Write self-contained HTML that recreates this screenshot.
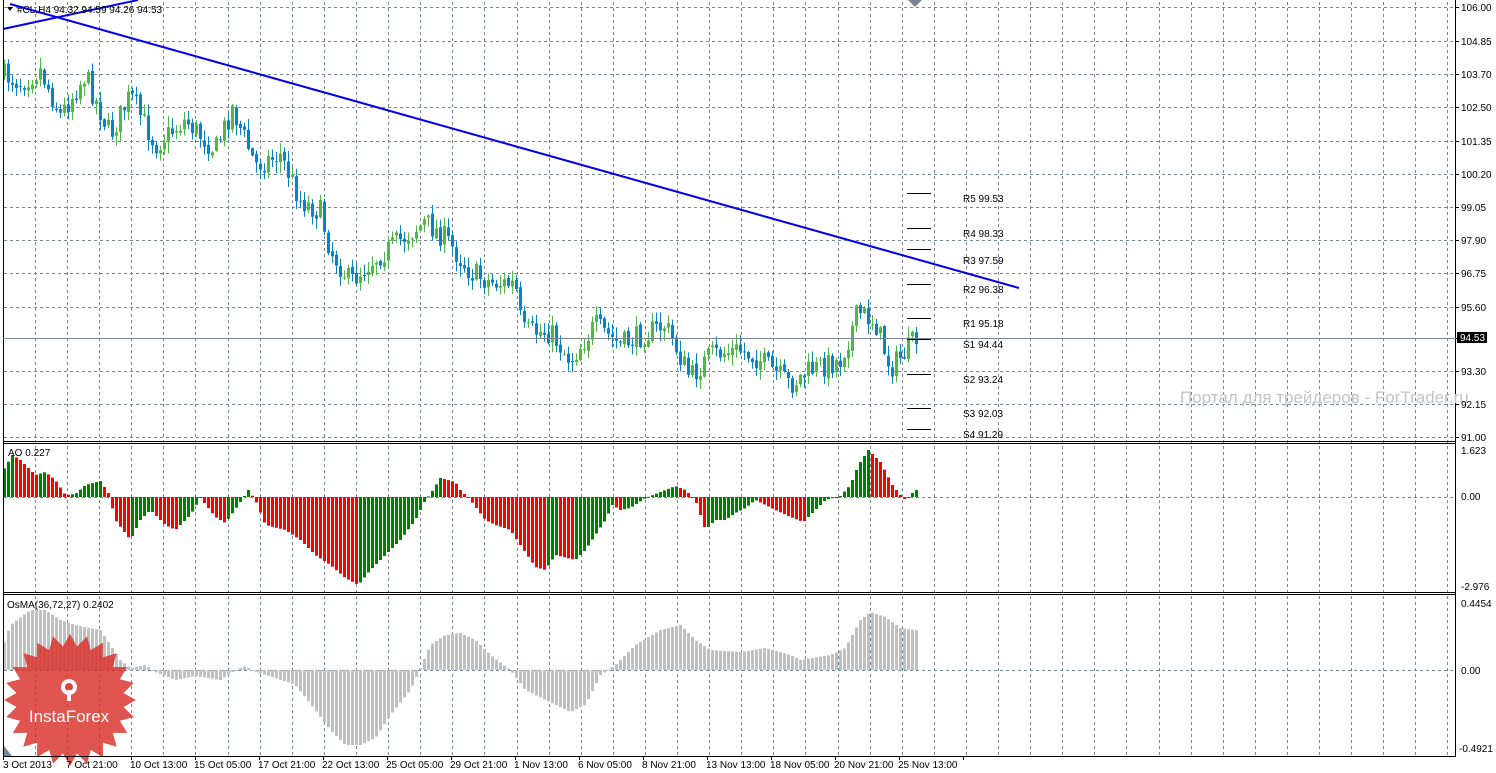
<!DOCTYPE html>
<html><head><meta charset="utf-8"><style>
html,body{margin:0;padding:0;background:#fff;width:1496px;height:773px;overflow:hidden}
svg{display:block;font-family:"Liberation Sans",Arial,sans-serif}
.ax{font-size:10px;fill:#000}
.pv{font-size:10px;fill:#000}
</style></head><body>
<svg id="s" width="1496" height="773" viewBox="0 0 1496 773" xmlns="http://www.w3.org/2000/svg">
<rect width="1496" height="773" fill="#fff"/>
<g id="grid" stroke="#7a8593" stroke-width="1" stroke-dasharray="3,3" fill="none"></g>
<g id="candles"></g>
<g id="ao"></g>
<g id="osma"></g>
<polygon id="star" fill="#d92a26" fill-opacity="0.8"/>
<g fill="#fff">
<circle cx="69" cy="687" r="8"/>
<circle cx="69" cy="687" r="4" fill="#e0403a"/>
<rect x="67" y="690" width="4" height="11"/>
</g>
<text x="69" y="722" text-anchor="middle" fill="#fff" font-size="17" font-family="'Liberation Sans',sans-serif">InstaForex</text>
<g stroke="#000" fill="none" stroke-width="1">
<line x1="3.5" y1="0" x2="3.5" y2="757"/>
<line x1="1455.5" y1="0" x2="1455.5" y2="757"/>
<line x1="3" y1="441.5" x2="1456" y2="441.5"/>
<line x1="3" y1="443.5" x2="1456" y2="443.5"/>
<line x1="3" y1="592.5" x2="1456" y2="592.5"/>
<line x1="3" y1="594.5" x2="1456" y2="594.5"/>
<line x1="3" y1="756.5" x2="1456" y2="756.5"/>
</g>
<line x1="10" y1="4" x2="1019" y2="288" stroke="#0000ee" stroke-width="2"/>
<line x1="3" y1="29" x2="138" y2="0" stroke="#0000ee" stroke-width="2"/>
<line x1="3" y1="338.5" x2="1456" y2="338.5" stroke="#7a8593"/>
<rect x="1457" y="332" width="30" height="11" fill="#000"/>
<text x="1460" y="341" font-size="10" fill="#fff">94.53</text>
<g stroke="#000" stroke-width="1">
<line x1="907" y1="193.5" x2="931" y2="193.5"/>
<line x1="907" y1="228.5" x2="931" y2="228.5"/>
<line x1="907" y1="249.5" x2="931" y2="249.5"/>
<line x1="907" y1="284.5" x2="931" y2="284.5"/>
<line x1="907" y1="318.5" x2="931" y2="318.5"/>
<line x1="907" y1="339.5" x2="931" y2="339.5"/>
<line x1="907" y1="374.5" x2="931" y2="374.5"/>
<line x1="907" y1="408.5" x2="931" y2="408.5"/>
<line x1="907" y1="429.5" x2="931" y2="429.5"/>
</g>
<g class="pv">
<text x="963" y="202">R5 99.53</text>
<text x="963" y="237">R4 98.33</text>
<text x="963" y="264">R3 97.59</text>
<text x="963" y="293">R2 96.38</text>
<text x="963" y="327">R1 95.18</text>
<text x="963" y="348">S1 94.44</text>
<text x="963" y="383">S2 93.24</text>
<text x="963" y="417">S3 92.03</text>
<text x="963" y="438">S4 91.29</text>
</g>
<text x="1180" y="403" font-size="17" fill="#c4c4c4" font-family="'Liberation Sans',sans-serif">Портал для трейдеров - ForTrader.ru</text>
<polygon points="7,7 13,7 10,11" fill="#000"/>
<text x="17" y="13" font-size="10" fill="#000">#CL,H4  94.32 94.59 94.26 94.53</text>
<text x="8" y="456" font-size="10" fill="#000">AO 0.227</text>
<text x="7" y="608" font-size="10" fill="#000">OsMA(36,72,27) 0.2402</text>
<polygon points="908,0 922,0 915,7" fill="#7a8593"/>
<polygon points="4,756 4,746 12,756" fill="#7a8593"/>
<g class="ax">
<text x="1461" y="11">106.00</text>
<text x="1461" y="45">104.85</text>
<text x="1461" y="78">103.70</text>
<text x="1461" y="111">102.50</text>
<text x="1461" y="145">101.35</text>
<text x="1461" y="178">100.20</text>
<text x="1461" y="211">99.05</text>
<text x="1461" y="244">97.90</text>
<text x="1461" y="277">96.75</text>
<text x="1461" y="311">95.60</text>
<text x="1461" y="375">93.30</text>
<text x="1461" y="408">92.15</text>
<text x="1461" y="441">91.00</text>
<text x="1461" y="454">1.623</text>
<text x="1461" y="500">0.00</text>
<text x="1461" y="590">-2.976</text>
<text x="1461" y="607">0.4454</text>
<text x="1461" y="674">0.00</text>
<text x="1459" y="752">-0.4921</text>
</g>
<g class="ax">
<text x="3" y="768">3 Oct 2013</text>
<text x="66" y="768">7 Oct 21:00</text>
<text x="130" y="768">10 Oct 13:00</text>
<text x="194" y="768">15 Oct 05:00</text>
<text x="258" y="768">17 Oct 21:00</text>
<text x="322" y="768">22 Oct 13:00</text>
<text x="386" y="768">25 Oct 05:00</text>
<text x="450" y="768">29 Oct 21:00</text>
<text x="514" y="768">1 Nov 13:00</text>
<text x="578" y="768">6 Nov 05:00</text>
<text x="642" y="768">8 Nov 21:00</text>
<text x="706" y="768">13 Nov 13:00</text>
<text x="770" y="768">18 Nov 05:00</text>
<text x="834" y="768">20 Nov 21:00</text>
<text x="898" y="768">25 Nov 13:00</text>
</g>
<g id="ticks" stroke="#000"></g>
</svg>
<script>
(function(){
var NS="http://www.w3.org/2000/svg";
function el(p,t,a){var e=document.createElementNS(NS,t);for(var k in a)e.setAttribute(k,a[k]);p.appendChild(e);return e;}
var g=document.getElementById('grid');
for(var x=35;x<1455;x+=32.1){var xx=Math.round(x)+.5;el(g,'line',{x1:xx,y1:2,x2:xx,y2:756});}
var hy=[7,41,74,107,141,174,207,240,273,307,371,404,437];
hy.forEach(function(y){el(g,'line',{x1:4,y1:y+.5,x2:1455,y2:y+.5});});
el(g,'line',{x1:4,y1:497.5,x2:1455,y2:497.5});
el(g,'line',{x1:4,y1:670.5,x2:1455,y2:670.5});
var tk=document.getElementById('ticks');
hy.concat([338]).forEach(function(y){el(tk,'line',{x1:1456,y1:y+.5,x2:1459,y2:y+.5});});
for(var x=3;x<1000;x+=64){el(tk,'line',{x1:x+.5,y1:757,x2:x+.5,y2:760});}
function interp(k,x){for(var i=0;i<k.length-1;i++){if(x>=k[i][0]&&x<=k[i+1][0]){var t=(x-k[i][0])/(k[i+1][0]-k[i][0]);return k[i][1]+t*(k[i+1][1]-k[i][1]);}}return x<k[0][0]?k[0][1]:k[k.length-1][1];}
var seed=7;function rnd(){seed=(seed*16807)%2147483647;return seed/2147483647;}
var pk=[[3,75],[20,82],[40,70],[60,115],[85,75],[110,135],[130,95],[155,145],[185,120],[215,150],[232,108],[255,165],[280,155],[300,200],[320,212],[330,250],[350,282],[370,262],[400,240],[425,222],[445,238],[470,272],[490,282],[515,285],[522,332],[550,332],[570,360],[595,325],[620,345],[665,325],[690,378],[710,355],[740,350],[760,360],[790,385],[810,370],[840,360],[858,312],[875,322],[890,368],[905,352],[915,340]];
var c=document.getElementById('candles');var prev=interp(pk,3);
for(var x=4;x<=916;x+=4){var cl=interp(pk,x)+(rnd()-0.5)*24;var op=prev+(rnd()-0.5)*4;
var tp=Math.min(op,cl),bt=Math.max(op,cl);var hi=tp-rnd()*10-1,lo=bt+rnd()*10+1;
var col=cl<op?'#4fb848':'#0a82c8';
el(c,'line',{x1:x+.5,y1:hi,x2:x+.5,y2:lo,stroke:col});
el(c,'rect',{x:x-1,y:tp,width:3,height:Math.max(1,bt-tp),fill:col});prev=cl;}
var ak=[[3,470],[12,455],[20,460],[35,475],[45,472],[55,480],[65,495],[75,494],[85,485],[100,481],[108,493],[115,520],[130,540],[140,520],[150,510],[165,525],[175,530],[190,515],[200,498],[215,517],[225,523],[238,505],[248,490],[255,500],[265,525],[285,530],[300,540],[315,555],[330,565],[345,578],[358,585],[370,570],[385,555],[400,540],[415,520],[425,500],[430,494],[440,478],[455,482],[460,490],[470,500],[485,520],[495,525],[510,530],[520,545],[535,567],[545,570],[555,555],[575,560],[585,550],[595,535],[605,520],[612,505],[620,510],[630,508],[645,498],[660,492],[675,486],[685,490],[695,500],[705,530],[715,520],[725,520],[735,513],[745,508],[755,500],[765,505],[775,510],[790,517],[803,522],[815,510],[825,500],[840,496],[850,485],[858,465],[868,450],[880,462],[892,485],[900,495],[905,500],[915,490]];
var a=document.getElementById('ao');var pv=null;
for(var x=4;x<=916;x+=4){var v=interp(ak,x);var col=(pv===null||v<=pv)?'#008000':'#ff0000';
el(a,'rect',{x:x-1,y:Math.min(v,497),width:3,height:Math.max(1,Math.abs(v-497)),fill:col});pv=v;}
var ok=[[3,645],[10,625],[30,610],[45,610],[60,620],[75,625],[100,630],[110,645],[120,660],[130,668],[145,665],[155,672],[175,680],[195,676],[220,680],[235,670],[245,666],[255,672],[275,678],[295,685],[315,710],[330,730],[345,745],[360,745],[375,738],[390,715],[410,690],[420,668],[430,645],[445,635],[460,633],[475,640],[490,655],[510,670],[525,690],[545,700],[570,712],[585,705],[600,675],[615,665],[635,645],[660,630],[680,625],[695,640],[710,650],[740,652],[765,648],[790,655],[800,660],[830,655],[845,648],[860,620],[870,612],[885,617],[900,628],[915,630]];
var o=document.getElementById('osma');
for(var x=4;x<=916;x+=4){var v=interp(ok,x);el(o,'rect',{x:x-1,y:Math.min(v,670),width:3,height:Math.max(1,Math.abs(v-670)),fill:'#c0c0c0'});}
var pts=[];var cx=70,cy=700;for(var i=0;i<48;i++){var r=i%2?54:66;var an=i*Math.PI/24-Math.PI/2;pts.push((cx+r*Math.cos(an)).toFixed(1)+','+(cy+r*Math.sin(an)).toFixed(1));}
document.getElementById('star').setAttribute('points',pts.join(' '));
})();
</script>
</body></html>
